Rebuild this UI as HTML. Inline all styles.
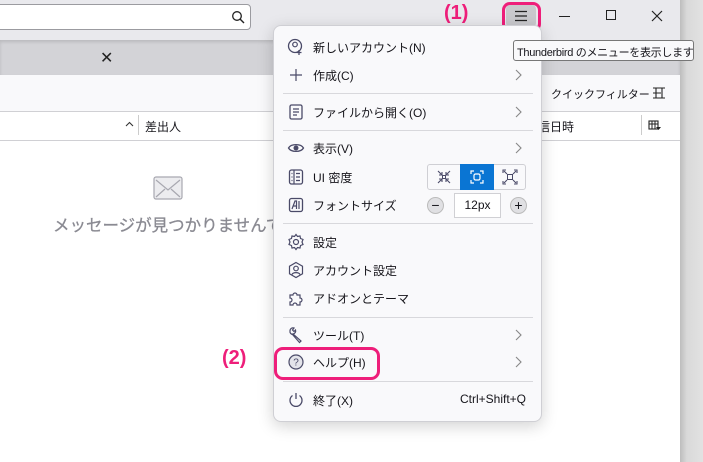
<!DOCTYPE html>
<html><head><meta charset="utf-8"><style>
*{box-sizing:border-box;margin:0;padding:0}
body{width:703px;height:462px;overflow:hidden;position:relative;background:#fff;font-family:"Liberation Sans","Noto Sans CJK JP",sans-serif;font-size:12px;color:#15141a}
.a{position:absolute}
.mi{position:absolute;left:273px;width:269px;height:26px;display:flex;align-items:center}
.mi .ic{position:absolute;left:14px;top:4px;width:18px;height:18px}
.mi .t{position:absolute;left:40px;top:5px;font-size:12px;white-space:nowrap}
.mi .ch{position:absolute;right:20px;top:7px;width:7px;height:12px}
.sep{position:absolute;left:283px;width:250px;height:1px;background:#d8d8dc}
</style></head><body>
<div class="a" style="left:0;top:0;width:680px;height:40px;background:#e9e9ed"></div>
<div class="a" style="left:-5px;top:4px;width:256px;height:26px;background:#fff;border:1px solid #9b9ba0;border-radius:4px"></div>
<svg class="a" style="left:231px;top:10px" width="14" height="14"><circle cx="6" cy="6" r="4.3" fill="none" stroke="#222" stroke-width="1.3"/><path d="M9 9l4 4" stroke="#222" stroke-width="1.4"/></svg>
<div class="a" style="left:0;top:40px;width:680px;height:35px;background:#d3d3d7;box-shadow:inset 0 2px 3px rgba(0,0,0,.12)"></div>
<div class="a" style="left:100px;top:48px;font-size:16px;color:#222">✕</div>
<div class="a" style="left:0;top:75px;width:680px;height:37px;background:#f9f9fb;border-bottom:1px solid #d0d0d4"></div>
<div class="a" style="left:0;top:112px;width:680px;height:29px;background:#fff;border-bottom:1px solid #d0d0d4"></div>
<svg class="a" style="left:125px;top:121px" width="9" height="6"><path d="M1 5l3.5-3.5L8 5" fill="none" stroke="#333" stroke-width="1.1"/></svg>
<div class="a" style="left:138px;top:115px;width:1px;height:20px;background:#ccc"></div>
<div class="a" style="left:145px;top:118px;font-size:12px">差出人</div>
<div class="a" style="left:538px;top:118px;font-size:12px">信日時</div>
<div class="a" style="left:641px;top:115px;width:1px;height:20px;background:#ccc"></div>
<svg class="a" style="left:648px;top:120px" width="13" height="11"><rect x="1" y="1" width="9" height="8" fill="none" stroke="#222" stroke-width="1.1"/><path d="M1 4h9M4 1v8M7 1v8" stroke="#222"/><path d="M8 7h5l-2.5 3z" fill="#222"/></svg>
<div class="a" style="left:551px;top:86px;font-size:11px;white-space:nowrap">クイックフィルター</div>
<svg class="a" style="left:652px;top:86px" width="14" height="14"><path d="M1 2h12M1 12h12M4 2v10M10 2v10M1 7h8" stroke="#222" stroke-width="1.1" fill="none"/></svg>
<svg class="a" style="left:153px;top:176px" width="30" height="24"><rect x="1" y="1" width="28" height="22" rx="2" fill="#ececef" stroke="#a8a8b0" stroke-width="1.2"/><path d="M3 4l12 10 12-10M3 21l9-8M27 21l-9-8" fill="none" stroke="#a8a8b0" stroke-width="1.2"/></svg>
<div class="a" style="left:53px;top:212px;font-size:16.5px;color:#8a8a92;white-space:nowrap;-webkit-text-stroke:0.3px #8a8a92">メッセージが見つかりませんでした</div>
<div class="a" style="left:680px;top:0;width:23px;height:462px;background:linear-gradient(90deg,#bdbdbd,#d9d9d9 30%,#e2e2e2)"></div>
<div class="a" style="left:506px;top:5px;width:30px;height:22px;background:#c9c9cd;border-radius:4px"></div>
<div class="a" style="left:502px;top:2px;width:39px;height:30px;border:3px solid #ee1e7a;border-radius:8px"></div>
<svg class="a" style="left:514px;top:10px" width="14" height="12"><path d="M1 1.5h12M1 6h12M1 10.5h12" stroke="#222" stroke-width="1.2"/></svg>
<div class="a" style="left:559px;top:16px;width:11px;height:1px;background:#222"></div>
<div class="a" style="left:606px;top:10px;width:10px;height:10px;border:1.2px solid #222"></div>
<svg class="a" style="left:651px;top:10px" width="12" height="12"><path d="M1 1l10 10M11 1L1 11" stroke="#222" stroke-width="1.2"/></svg>
<div class="a" style="left:444px;top:2px;font-size:20px;font-weight:bold;color:#ee1e7a">(1)</div>
<div class="a" style="left:273px;top:25px;width:269px;height:397px;background:#f9f9fb;border:1px solid #cfcfd4;border-radius:8px;box-shadow:0 4px 16px rgba(0,0,0,.18)"></div>
<div class="mi" style="top:34px"><svg class="ic" viewBox="0 0 18 18"><circle cx="8" cy="8" r="6.5" fill="none" stroke="#4a4a68" stroke-width="1.3"/><circle cx="8" cy="6.5" r="2.3" fill="none" stroke="#4a4a68" stroke-width="1.2"/><path d="M12 12v5M9.5 14.5h5" stroke="#4a4a68" stroke-width="1.3"/></svg><span class="t">新しいアカウント(N)</span></div>
<div class="mi" style="top:62px"><svg class="ic" viewBox="0 0 18 18"><path d="M9 3v12M3 9h12" stroke="#4a4a68" stroke-width="1.2"/></svg><span class="t">作成(C)</span><svg class="ch"><path d="M1 1l5 5-5 5" fill="none" stroke="#888" stroke-width="1.1"/></svg></div>
<div class="sep" style="top:93px"></div>
<div class="mi" style="top:99px"><svg class="ic" viewBox="0 0 18 18"><rect x="3" y="2" width="12" height="14" rx="1.5" fill="none" stroke="#4a4a68" stroke-width="1.3"/><path d="M6 6h6M6 9h6M6 12h4" stroke="#4a4a68" stroke-width="1.2"/></svg><span class="t">ファイルから開く(O)</span><svg class="ch"><path d="M1 1l5 5-5 5" fill="none" stroke="#888" stroke-width="1.1"/></svg></div>
<div class="sep" style="top:130px"></div>
<div class="mi" style="top:135px"><svg class="ic" viewBox="0 0 18 18"><path d="M1.5 9C4 4.5 14 4.5 16.5 9 14 13.5 4 13.5 1.5 9z" fill="none" stroke="#4a4a68" stroke-width="1.3"/><circle cx="9" cy="9" r="2.5" fill="#4a4a68"/></svg><span class="t">表示(V)</span><svg class="ch"><path d="M1 1l5 5-5 5" fill="none" stroke="#888" stroke-width="1.1"/></svg></div>
<div class="mi" style="top:164px"><svg class="ic" viewBox="0 0 18 18"><rect x="2.5" y="2" width="13" height="14" rx="2" fill="none" stroke="#4a4a68" stroke-width="1.3"/><path d="M7 2v14M4.5 5.5h1M4.5 9h1M4.5 12.5h1M9 5.5h4M9 9h4M9 12.5h4" stroke="#4a4a68" stroke-width="1.2"/></svg><span class="t">UI 密度</span></div>
<div class="a" style="left:427px;top:164px;width:99px;height:26px;border:1px solid #cfcfd4;border-radius:3px;background:#f9f9fb"></div>
<div class="a" style="left:460px;top:164px;width:34px;height:26px;background:#0a75d3"></div>
<svg class="a" style="left:436px;top:169px" width="16" height="16"><path d="M2 2l4 4M14 2l-4 4M2 14l4-4M14 14l-4-4M6 3v3H3M10 3v3h3M6 13v-3H3M10 13v-3h3" fill="none" stroke="#4a4a68" stroke-width="1.1"/><rect x="6.5" y="6.5" width="3" height="3" fill="none" stroke="#4a4a68"/></svg>
<svg class="a" style="left:469px;top:169px" width="16" height="16"><path d="M2 5V2h3M11 2h3v3M14 11v3h-3M5 14H2v-3" fill="none" stroke="#fff" stroke-width="1.2"/><rect x="5" y="5" width="6" height="6" rx="1.5" fill="none" stroke="#fff" stroke-width="1.2"/></svg>
<svg class="a" style="left:502px;top:169px" width="16" height="16"><path d="M1 4V1h3M12 1h3v3M15 12v3h-3M4 15H1v-3M2 2l3 3M14 2l-3 3M2 14l3-3M14 14l-3-3" fill="none" stroke="#4a4a68" stroke-width="1.1"/><rect x="5.5" y="5.5" width="5" height="5" fill="none" stroke="#4a4a68"/></svg>
<div class="mi" style="top:192px"><svg class="ic" viewBox="0 0 18 18"><rect x="2.5" y="2.5" width="13" height="13" rx="2" fill="none" stroke="#4a4a68" stroke-width="1.3"/><path d="M5 13l3-8h1.5v8M6 10h3.5M12 5v8" fill="none" stroke="#4a4a68" stroke-width="1.2"/></svg><span class="t">フォントサイズ</span></div>
<div class="a" style="left:427px;top:197px;width:17px;height:17px;border-radius:50%;background:#e0e0e3;border:1px solid #bbb;text-align:center;line-height:14px;font-size:14px">−</div>
<div class="a" style="left:454px;top:193px;width:47px;height:25px;background:#fff;border:1px solid #d0d0d4;text-align:center;line-height:23px;font-size:12px">12px</div>
<div class="a" style="left:510px;top:197px;width:17px;height:17px;border-radius:50%;background:#e0e0e3;border:1px solid #bbb;text-align:center;line-height:15px;font-size:14px">+</div>
<div class="sep" style="top:223px"></div>
<div class="mi" style="top:229px"><svg class="ic" viewBox="0 0 18 18"><path d="M9 1.5l1.5 2 2.5-.5.5 2.5 2.5 1-1 2.5 1 2.5-2.5 1-.5 2.5-2.5-.5L9 16.5l-1.5-2-2.5.5-.5-2.5-2.5-1 1-2.5-1-2.5 2.5-1 .5-2.5 2.5.5z" fill="none" stroke="#4a4a68" stroke-width="1.2"/><circle cx="9" cy="9" r="2.5" fill="none" stroke="#4a4a68" stroke-width="1.2"/></svg><span class="t">設定</span></div>
<div class="mi" style="top:257px"><svg class="ic" viewBox="0 0 18 18"><path d="M9 1.5l6.5 3.7v7.6L9 16.5l-6.5-3.7V5.2z" fill="none" stroke="#4a4a68" stroke-width="1.2"/><circle cx="9" cy="7.5" r="2.3" fill="none" stroke="#4a4a68" stroke-width="1.2"/><path d="M5 13.5c1-2.5 7-2.5 8 0" fill="none" stroke="#4a4a68" stroke-width="1.2"/></svg><span class="t">アカウント設定</span></div>
<div class="mi" style="top:285px"><svg class="ic" viewBox="0 0 18 18"><path d="M3 6h3a2 2 0 1 1 4 0h3v3a2 2 0 1 1 0 4v3h-3a2 2 0 1 0-4 0H3v-3a2 2 0 1 0 0-4z" fill="none" stroke="#4a4a68" stroke-width="1.2"/></svg><span class="t">アドオンとテーマ</span></div>
<div class="sep" style="top:317px"></div>
<div class="mi" style="top:322px"><svg class="ic" viewBox="0 0 18 18"><path d="M3 5a3 3 0 0 1 4-3L5.5 4l1.5 1.5L8.5 4a3 3 0 0 1-2.5 4l8 7-1.5 1.5-7-8A3 3 0 0 1 3 5z" fill="none" stroke="#4a4a68" stroke-width="1.2"/></svg><span class="t">ツール(T)</span><svg class="ch"><path d="M1 1l5 5-5 5" fill="none" stroke="#888" stroke-width="1.1"/></svg></div>
<div class="mi" style="top:349px"><svg class="ic" viewBox="0 0 18 18"><circle cx="9" cy="9" r="7" fill="#e4e4ea" stroke="#4a4a68" stroke-width="1.2"/><text x="9" y="12.5" font-size="10" text-anchor="middle" fill="#4a4a68" font-family="Liberation Sans">?</text></svg><span class="t">ヘルプ(H)</span><svg class="ch"><path d="M1 1l5 5-5 5" fill="none" stroke="#888" stroke-width="1.1"/></svg></div>
<div class="a" style="left:274px;top:347px;width:106px;height:33px;border:3px solid #ee1e7a;border-radius:9px"></div>
<div class="a" style="left:222px;top:347px;font-size:20px;font-weight:bold;color:#ee1e7a">(2)</div>
<div class="sep" style="top:381px"></div>
<div class="mi" style="top:387px"><svg class="ic" viewBox="0 0 18 18"><path d="M5.5 4.5a6 6 0 1 0 7 0M9 2v6" fill="none" stroke="#4a4a68" stroke-width="1.3"/></svg><span class="t">終了(X)</span><span class="a" style="right:16px;top:5px;font-size:12px">Ctrl+Shift+Q</span></div>
<div class="a" style="left:513px;top:40px;width:181px;height:21px;background:#f9f9fb;border:1px solid #777;border-radius:3px;font-size:11px;letter-spacing:-0.3px;padding:3px 0 0 3px;white-space:nowrap;overflow:hidden;z-index:5">Thunderbird のメニューを表示します</div>
</body></html>
